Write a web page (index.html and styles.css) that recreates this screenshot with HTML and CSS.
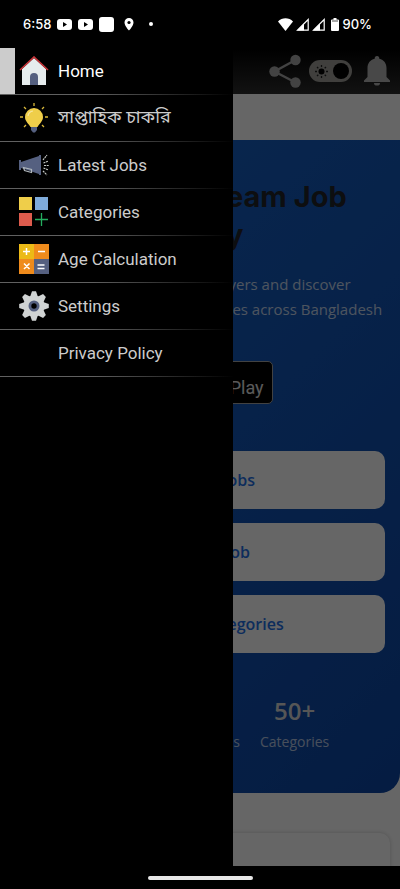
FILE: index.html
```html
<!DOCTYPE html>
<html lang="en">

<head>
    <meta charset="UTF-8">
    <meta name="viewport" content="width=device-width, initial-scale=1.0">
    <title>Jobs</title>
    <link rel="stylesheet" href="styles.css">
</head>

<body>
    <div class="screen">
        <div class="status">
            <div class="status-left">
                <span>6:58</span>
                <svg width="15" height="12" viewBox="0 0 15 12"><rect y="1" width="15" height="11" rx="3" fill="#fff"/><path d="M6 4l4 2.5L6 9z" fill="#000"/></svg>
                <svg width="15" height="12" viewBox="0 0 15 12"><rect y="1" width="15" height="11" rx="3" fill="#fff"/><path d="M6 4l4 2.5L6 9z" fill="#000"/></svg>
                <svg width="15" height="15" viewBox="0 0 15 15"><rect width="15" height="15" rx="3" fill="#fff"/></svg>
                <svg class="pin" width="10" height="13" viewBox="0 0 10 13"><path d="M5 0a4.500 4.500 0 0 0-4.500 4.500C.5 8 5 12.500 5 12.500S9.500 8 9.500 4.500A4.500 4.500 0 0 0 5 0z" fill="#fff"/><circle cx="5" cy="4.500" r="1.600" fill="#000"/></svg>
                <svg class="dot" width="4" height="4" viewBox="0 0 4 4"><circle cx="2" cy="2" r="2" fill="#fff"/></svg>
            </div>
            <div class="status-right">
                <svg width="15" height="13" viewBox="0 0 15 13"><path d="M0 3.500C4-.8 11-.8 15 3.500L7.500 13z" fill="#fff"/></svg>
                <svg width="13" height="13" viewBox="0 0 13 13"><path d="M1.500 12.200L12.200 1.500v10.700z" fill="none" stroke="#fff" stroke-width="1.200"/><path d="M1 12.500L8 5.500v7z" fill="#fff"/></svg>
                <svg width="13" height="13" viewBox="0 0 13 13"><path d="M1.500 12.200L12.200 1.500v10.700z" fill="none" stroke="#fff" stroke-width="1.200"/><path d="M1 12.500L8 5.500v7z" fill="#fff"/></svg>
                <svg class="battery" width="8" height="13" viewBox="0 0 8 13"><path d="M2.500 0h3v1.500H7a1 1 0 0 1 1 1V12a1 1 0 0 1-1 1H1a1 1 0 0 1-1-1V2.500a1 1 0 0 1 1-1h1.500z" fill="#fff"/><path d="M1 3h6" stroke="#000" stroke-width=".7"/></svg>
                <span>90%</span>
            </div>
        </div>

        <div class="app">
            <main class="page">
                <header class="toolbar">
                    <button class="icon-btn" aria-label="Share">
                        <svg width="32" height="34" viewBox="0 0 32 34"><path d="M26.500 6L5.500 17.500l21 11" fill="none" stroke="#a8a8a8" stroke-width="2.400"/><g fill="#a8a8a8"><circle cx="26.500" cy="6" r="5.200"/><circle cx="5.500" cy="17.500" r="5.200"/><circle cx="26.500" cy="28.500" r="5.200"/></g></svg>
                    </button>
                    <label class="theme" aria-label="Dark mode">
                        <input type="checkbox" checked>
                        <svg width="15" height="15" viewBox="0 0 15 15"><circle cx="7.500" cy="7.500" r="3" fill="#000"/><path d="M7.500 1v2M7.500 12v2M1 7.500h2M12 7.500h2M3 3l1.300 1.300M10.700 10.700L12 12M3 12l1.300-1.300M10.700 4.300L12 3" stroke="#222" stroke-width="1.300"/></svg>
                    </label>
                    <button class="icon-btn" aria-label="Notifications">
                        <svg width="26" height="30" viewBox="0 0 26 30"><path d="M13 0c1.500 0 2.500 1.200 2.300 2.700C20 3.800 22.500 7.500 22.500 12v9l3.500 3.500V26H0v-1.500L3.500 21v-9c0-4.500 2.500-8.200 7.200-9.300C10.500 1.200 11.500 0 13 0z" fill="#b4b4b4"/><path d="M10 27h6a3 2.600 0 0 1-6 0z" fill="#b4b4b4"/></svg>
                    </button>
                </header>

                <div class="band"></div>

                <section class="hero">
                    <h1>Find Your Dream Job Today</h1>
                    <p>Connect with good employers and discover<br>thousands of open opportunities across Bangladesh</p>
                    <a href="#" class="play">
                        <svg width="24" height="26" viewBox="0 0 24 26"><path d="M1 1l12 12L1 25z" fill="#00c3ff"/><path d="M1 1l16 8-4 4z" fill="#00e676"/><path d="M1 25l16-8-4-4z" fill="#ff3a44"/><path d="M17 9l6 4-6 4-4-4z" fill="#ffd500"/></svg>
                        <span class="play-text"><small>GET IT ON</small>Google Play</span>
                    </a>
                    <div class="actions">
                        <button><svg width="18" height="16" viewBox="0 0 18 16"><circle cx="7" cy="7" r="5"/><path d="M11 11l4 4"/></svg>Latest Jobs</button>
                        <button><svg width="16" height="16" viewBox="0 0 16 16"><path d="M8 2v12M2 8h12"/></svg>Post a Job</button>
                        <button><svg width="16" height="16" viewBox="0 0 16 16"><path d="M2 3h12M2 8h12M2 13h12"/></svg>Browse Categories</button>
                    </div>
                    <div class="stats">
                        <div><strong>500+</strong><span>Posted Jobs</span></div>
                        <div><strong>100+</strong><span>Companies</span></div>
                        <div><strong>50+</strong><span>Categories</span></div>
                    </div>
                </section>

                <div class="card"></div>
            </main>

            <div class="scrim"></div>

            <nav class="drawer">
                <a href="#" class="item active">
                    <svg width="30" height="30" viewBox="0 0 30 30"><path d="M3 13L15 2l12 11v16H3z" fill="#e6eced"/><path d="M1 14L15 1l14 13" fill="none" stroke="#c9353a" stroke-width="1.600"/><path d="M11 29V21a4 4 0 0 1 8 0v8z" fill="#556080"/></svg>
                    <span>Home</span>
                </a>
                <a href="#" class="item" lang="bn">
                    <svg width="30" height="30" viewBox="0 0 30 30"><path d="M15 0v3M1 14h3M26 14h3M5 4l2 2M25 4l-2 2M5 24l2-2M25 24l-2-2" stroke="#d8b83a" stroke-width="1.300"/><path d="M12 22h6v5l-2 2.500h-2L12 27z" fill="#556080"/><path d="M15 5a9 9 0 0 0-9 9c0 4 3 6 5.500 10h7c2.500-4 5.500-6 5.500-10a9 9 0 0 0-9-9z" fill="#efce4a"/><path d="M9 13a6 6 0 0 1 5-5" fill="none" stroke="#f7e6a1" stroke-width="1.200"/></svg>
                    <span>সাপ্তাহিক চাকরি</span>
                </a>
                <a href="#" class="item">
                    <svg width="30" height="30" viewBox="0 0 30 30"><path d="M0 10h2v2L20 6V5h2v20h-2v-1L2 18v2H0z" fill="#556080"/><path d="M4.500 17.500l8 2v3l-7-2z" fill="none" stroke="#afb6bb" stroke-width="1.200"/><path d="M24 10l4-5M24.500 13l5-2M25 15.500h5M24.500 18l5 2M24 21l4 4" stroke="#c7cac7" stroke-width="1.200" stroke-dasharray="2 .7"/></svg>
                    <span>Latest Jobs</span>
                </a>
                <a href="#" class="item">
                    <svg width="30" height="30" viewBox="0 0 30 30"><path d="M0 0h13v13H0z" fill="#efce4a"/><path d="M16 0h13v13H16z" fill="#7fabda"/><path d="M0 16h13v13H0z" fill="#dd5b4d"/><path d="M22.500 16v13M16 22.500h13" stroke="#24ae5f" stroke-width="1.300"/></svg>
                    <span>Categories</span>
                </a>
                <a href="#" class="item">
                    <svg width="30" height="30" viewBox="0 0 30 30"><path d="M0 0h15v15H0z" fill="#ecba16"/><path d="M15 0h15v15H15zM0 15h15v15H0z" fill="#ef8b1c"/><path d="M15 15h15v15H15z" fill="#556080"/><path d="M4 7.500h7M7.500 4v7M19 7.500h7M5 19.500l5.500 5.500M10.500 19.500L5 25M18.500 21h7M18.500 24.500h7" stroke="#fff" stroke-width="1.500"/></svg>
                    <span>Age Calculation</span>
                </a>
                <a href="#" class="item">
                    <svg width="30" height="30" viewBox="0 0 30 30"><circle cx="15" cy="15" r="10.500" fill="#d0d3d3"/><g fill="#d0d3d3"><path id="tooth" d="M11 6l2-5.800h4L19 6v18l-2 5.800h-4L11 24z"/><use href="#tooth" transform="rotate(45 15 15)"/><use href="#tooth" transform="rotate(90 15 15)"/><use href="#tooth" transform="rotate(135 15 15)"/></g><circle cx="15" cy="15" r="5.500" fill="#556080"/><circle cx="15" cy="15" r="2.700" fill="#000"/></svg>
                    <span>Settings</span>
                </a>
                <a href="#" class="item">
                    <i class="no-icon"></i>
                    <span>Privacy Policy</span>
                </a>
            </nav>
        </div>

        <div class="gesture"><i></i></div>
    </div>
</body>

</html>
```

FILE: styles.css
```css
* {
    box-sizing: border-box;
    padding: 0;
    margin: 0;
}

body {
    background: #000;
    font-family: "Open Sans", "Noto Sans", sans-serif;
}

button {
    border: 0;
    font: inherit;
}

a {
    color: inherit;
    text-decoration: none;
}

svg {
    flex: none;
}

.screen {
    display: flex;
    flex-direction: column;
    height: 100vh;
    overflow: hidden;
}

/* status bar */
.status {
    display: flex;
    justify-content: space-between;
    align-items: center;
    flex: none;
    height: 48px;
    padding: 0 28px 0 23px;
    color: #fff;
    font: 500 13px Inter, sans-serif;
}

.status-left {
    display: flex;
    align-items: center;
    gap: 6px;
}

.pin {
    margin-left: 4px;
}

.dot {
    margin-left: 9px;
}

.status-right {
    display: flex;
    align-items: center;
    gap: 3px;
}

.battery {
    margin: 0 1px 0 3px;
}

.app {
    position: relative;
    flex: 1;
    min-height: 0;
    overflow: hidden;
}

/* page */
.page {
    height: 100%;
    overflow: hidden;
    background: #fff;
}

.toolbar {
    display: flex;
    justify-content: flex-end;
    align-items: center;
    gap: 8px;
    height: 46px;
    padding: 0 10px;
    background: linear-gradient(#000, #2e2e2e);
}

.icon-btn {
    display: flex;
    background: none;
}

.theme {
    display: flex;
    align-items: center;
    justify-content: space-between;
    flex-direction: row-reverse;
    width: 43px;
    height: 22px;
    margin-right: 4px;
    padding: 0 3px 0 5px;
    border-radius: 11px;
    background: #a09f9a;
}

.theme input {
    appearance: none;
    width: 16px;
    height: 16px;
    border-radius: 50%;
    background: #000;
}

.band {
    height: 46px;
    background: #fff;
}

.hero {
    padding: 38px 15px;
    border-radius: 0 0 20px 20px;
    background: linear-gradient(135deg, #1763c8, #0d47a5);
    color: #fff;
    text-align: center;
}

.hero h1 {
    color: #212529;
    font: 700 29px/38px Inter, sans-serif;
}

.hero p {
    margin: 18px 0 39px;
    color: rgba(255, 255, 255, .75);
    font-size: 15px;
    line-height: 25px;
}

.play {
    display: inline-flex;
    align-items: center;
    gap: 8px;
    height: 43px;
    padding: 0 8px;
    border: 1px solid #a6a6a6;
    border-radius: 5px;
    background: #000;
    vertical-align: top;
}

.play-text {
    display: flex;
    flex-direction: column;
    color: #e0e0e0;
    font: 18px/20px Roboto, sans-serif;
    text-align: left;
}

.play-text small {
    font-size: 9px;
    line-height: 10px;
}

.actions {
    display: flex;
    flex-direction: column;
    gap: 14px;
    margin-top: 47px;
}

.actions button {
    display: flex;
    align-items: center;
    justify-content: center;
    gap: 8px;
    height: 58px;
    border-radius: 10px;
    background: #fff;
    color: #1f70e6;
    font-size: 16px;
    font-weight: 600;
}

.actions svg {
    fill: none;
    stroke: #1f70e6;
    stroke-width: 2;
}

.stats {
    display: flex;
    justify-content: center;
    gap: 20px;
    margin-top: 40px;
}

.stats div {
    display: flex;
    flex-direction: column;
}

.stats strong {
    color: #d8d8d8;
    font-size: 24px;
    font-weight: 600;
    line-height: 36px;
}

.stats span {
    color: rgba(255, 255, 255, .7);
    font-size: 14px;
    line-height: 26px;
}

.card {
    height: 120px;
    margin: 40px 10px 0;
    border-radius: 10px;
    background: #fff;
    box-shadow: 0 0 4px rgba(0, 0, 0, .2);
}

/* menu over the page */
.scrim {
    position: absolute;
    inset: 0;
    background: rgba(0, 0, 0, .6);
}

.drawer {
    position: absolute;
    top: 0;
    bottom: 0;
    left: 0;
    width: 233px;
    background: #000;
}

.item {
    display: flex;
    align-items: center;
    gap: 9px;
    height: 47px;
    padding-left: 19px;
    border-bottom: 1px solid;
    border-image: linear-gradient(to right, #606060 40%, #000) 1;
    color: #ccc;
    font: 17px Roboto, sans-serif;
}

.item:lang(bn) {
    font: 18px "Noto Sans Bengali", sans-serif;
}

.active {
    background: linear-gradient(#ccc, #ccc) left / 15px 100% no-repeat;
    color: #fff;
}

.no-icon {
    width: 30px;
}

/* gesture bar */
.gesture {
    display: flex;
    align-items: center;
    justify-content: center;
    flex: none;
    height: 23px;
}

.gesture i {
    width: 105px;
    height: 4px;
    border-radius: 2px;
    background: #e8e8e8;
}
```
